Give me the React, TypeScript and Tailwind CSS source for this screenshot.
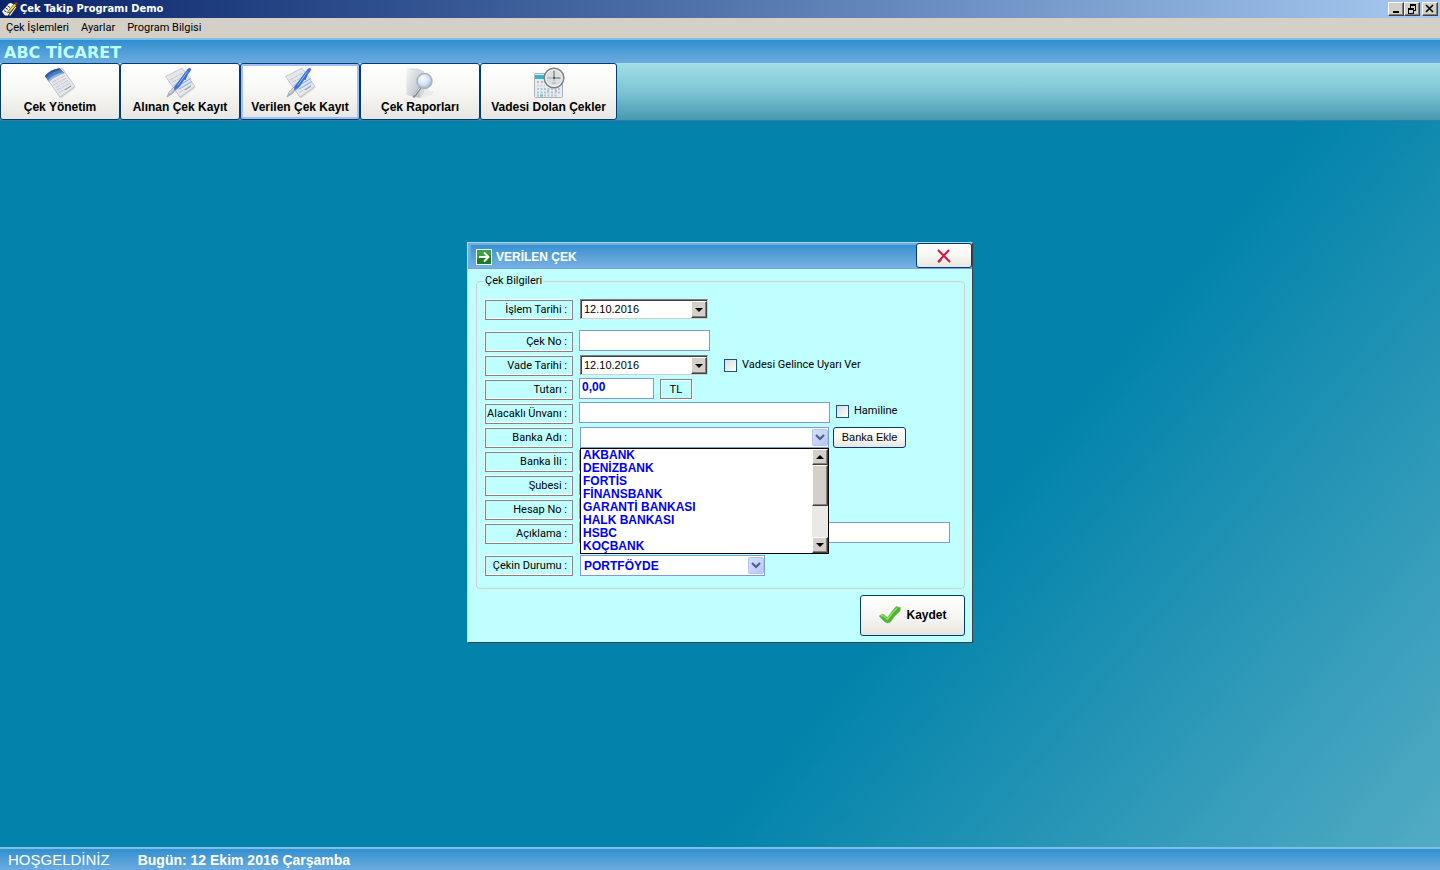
import { useState } from "react";
import type { ReactNode } from "react";

const BANKS = [
  "AKBANK",
  "DENİZBANK",
  "FORTİS",
  "FİNANSBANK",
  "GARANTİ BANKASI",
  "HALK BANKASI",
  "HSBC",
  "KOÇBANK",
];

const SANS = "font-['Liberation_Sans',Arial,sans-serif]";
const NARROW = "font-[Roboto,'Liberation_Sans',sans-serif]";
const XP_BUTTON =
  "rounded-[3px] border border-[#003c74] bg-linear-to-b from-white via-[#f7f7f4] to-[#e8e6e0] text-black";
const FIELD =
  "block h-[21px] border border-[#7b9bdc] bg-white px-0.5 text-[12px] font-bold text-[#0000f0] outline-none";
const BEVEL =
  "border border-t-white border-l-white border-r-[#404040] border-b-[#404040] bg-[#d4d0c8] shadow-[inset_-1px_-1px_0_#808080]";

/* ---------- icons ---------- */

function AppIcon() {
  return (
    <svg width="16" height="16" viewBox="0 0 16 16" aria-hidden="true">
      <path d="M0 10.500 7 2.500 9 2l2 1 1.500 1L6 14.500H3z" fill="#fafafa" />
      <path d="M3.500 7 6 8.500M2 9.500 4.500 11M5.500 5 8 6.500" stroke="#222" strokeWidth=".9" />
      <path d="M6.500 14.500 13.500 5l1 1.500-6 8.500z" fill="#fff" stroke="#111" strokeWidth=".7" />
      <path d="M6 10.500 12.500 2.500 14.500 4 8.500 11 5.500 12z" fill="#f5e21c" stroke="#222" strokeWidth=".6" />
      <path d="M12.500 2.500 13.800 1 16 2.500 14.500 4z" fill="#c81e1e" />
    </svg>
  );
}

function Sheet() {
  return (
    <g>
      <path d="M2 10 18 1.500 31 20 16 31z" fill="#8f929c" opacity=".3" transform="translate(.6 .8)" />
      <path d="M1.500 9.500 18 1 31 19.500 16 30z" fill="#e6e7ec" stroke="#b4b7c0" strokeWidth=".7" />
      <path
        d="M6 13 19 6M8 15.500 21 8.500M9.500 18 22.500 11M11.500 20.500 24 13.500M13 23 26 16M15 25.500 27.500 18.500"
        stroke="#bcbfc8"
        strokeWidth=".9"
        strokeDasharray="5 .8 3 .8"
      />
    </g>
  );
}

function ManageIcon() {
  return (
    <svg width="32" height="32" viewBox="0 0 32 32" fill="none" aria-hidden="true">
      <Sheet />
      <path d="M1 9Q6 2.500 15.500 1.200L20.500 6Q10 8 4.500 14.500z" fill="#4a7fc4" />
      <path d="M1 9Q6 2.500 15.500 1.200L17 2.800Q7 4.500 2.300 11z" fill="#30599a" />
      <path d="M4 13.300Q9 7.500 19 5.300L20.500 6.500Q10 9 5 15z" fill="#8ab6e6" />
      <path d="M21 23 27 19" stroke="#8c909a" />
    </svg>
  );
}

function PenIcon() {
  return (
    <svg width="32" height="32" viewBox="0 0 32 32" fill="none" aria-hidden="true">
      <Sheet />
      <path d="M18 16.500 27 11.500M15 22 28 14.500" stroke="#8db8f2" strokeWidth="1.300" />
      <path d="M21 23 27 19" stroke="#8c909a" />
      <path d="M3 30 5 25 14 15.500 16.500 18 8 27z" fill="#b4b8c2" stroke="#8b909a" strokeWidth=".5" />
      <path d="M5.500 26 14.500 17" stroke="#f6f6f8" />
      <path d="M10.500 20 21.500 5Q24 .8 26 1.200T25.500 5L15 20 10.500 23z" fill="#3674e0" stroke="#2a5fc0" strokeWidth=".4" />
      <path d="M13.500 18.500 23.500 4.500" stroke="#8fbcff" />
      <path d="M22.500 8 21 13" stroke="#2a62cc" strokeWidth="1.200" />
    </svg>
  );
}

function ReportIcon() {
  return (
    <svg width="32" height="32" viewBox="0 0 32 32" aria-hidden="true">
      <defs>
        <linearGradient id="folder" x1="0" y1="0" x2="1" y2="1">
          <stop offset="0" stopColor="#f4f6f7" />
          <stop offset="1" stopColor="#b4bdc3" />
        </linearGradient>
        <radialGradient id="lens" cx=".4" cy=".35" r=".7">
          <stop offset="0" stopColor="#fafdff" />
          <stop offset=".6" stopColor="#cfdff2" />
          <stop offset="1" stopColor="#94aed6" />
        </radialGradient>
      </defs>
      <path d="M15 24 23 21 25 24 30 24 28 28 16 31z" fill="#e8eaec" />
      <path d="M2.500 1.500 15 4.500 16 31 2.500 28z" fill="url(#folder)" />
      <path d="M3 1.500 13 1.500 20 4 20 26 16 31 15 5z" fill="#d3dade" />
      <path d="M16.500 20.500 10 29.500" stroke="#888d93" strokeWidth="2.600" strokeLinecap="round" />
      <path d="M16 20.500 10 28.500" stroke="#e4e6e8" strokeWidth="1" />
      <circle cx="20.500" cy="14" r="7.500" fill="url(#lens)" stroke="#adb1b7" strokeWidth="1.500" />
    </svg>
  );
}

function DueIcon() {
  return (
    <svg width="32" height="32" viewBox="0 0 32 32" fill="none" aria-hidden="true">
      <rect x="1.500" y="6.500" width="28" height="24" rx="1" fill="#e6edf0" stroke="#a9b3b9" />
      <rect x="2" y="8" width="12" height="4" fill="#38b4d8" />
      <path d="M4 15h7M14 24h2M22 24h2" stroke="#e0abb4" strokeWidth="2" strokeDasharray="2 2" />
      <path d="M4 22h24M4 25.500h24M4 28.500h20" stroke="#b4c6d0" strokeWidth="2" strokeDasharray="2 1.500" />
      <path d="M4 18.500h8" stroke="#ccd8de" strokeWidth="2" strokeDasharray="2 1.500" />
      <path d="M7 28.500h3" stroke="#6cc6da" strokeWidth="2" />
      <circle cx="21" cy="11" r="9.800" fill="#dcdfe1" stroke="#7c8083" strokeWidth="1.500" />
      <circle cx="21" cy="11" r="8.300" stroke="#f2f2f2" />
      <path d="M21 3.500V11h6.500" stroke="#5f6367" />
      <path d="M14 11h6M21 12v2M19 16h4" stroke="#9fa4a8" />
      <circle cx="21" cy="11" r="1" fill="#444" />
    </svg>
  );
}

function ArrowBadge() {
  return (
    <svg width="16" height="16" viewBox="0 0 16 16" fill="none" aria-hidden="true">
      <rect x=".5" y=".5" width="15" height="15" fill="#3aa044" stroke="#fff" />
      <path d="M1 10 15 6v9H1z" fill="#1c7d26" />
      <path d="M3 8h9M8 3.500 12.500 8 8 12.500" stroke="#fff" strokeWidth="2" />
    </svg>
  );
}

function RedCross() {
  return (
    <svg width="14" height="14" viewBox="0 0 14 14" fill="none" aria-hidden="true">
      <path d="M2 13.500 5 10.500M9 9l4 4" stroke="#8c8c8c" strokeWidth="1.500" />
      <path d="M1 13 12 1M1 1l12 12" stroke="#dc143c" strokeWidth="2" />
    </svg>
  );
}

function GreenCheck() {
  return (
    <svg width="24" height="20" viewBox="0 0 24 20" aria-hidden="true">
      <path
        d="M1 11 5 9 9.500 12.500Q14 6 18 1.500L22.500 2.500 22 6Q16 11 12.500 17 9.500 19 7 17 4 14.500 1 11z"
        fill="#4fb035"
        stroke="#7ccb62"
        strokeWidth=".7"
      />
      <path d="M3 11 5 10.500l4.500 4Q14 8 19 3" fill="none" stroke="#8fdc72" strokeWidth="1.400" />
    </svg>
  );
}

function Triangle({ up = false }: { up?: boolean }) {
  return (
    <svg width="8" height="4" viewBox="0 0 8 4" aria-hidden="true">
      <path d={up ? "M0 4h8L4 0z" : "M0 0h8L4 4z"} fill="#000" />
    </svg>
  );
}

function ComboChevron() {
  return (
    <span className="grid h-[17px] w-4 place-items-center rounded-[2px] border border-[#b0c4f0] bg-linear-to-br from-[#d6e2fb] to-[#b4c8f2]">
      <svg width="10" height="7" viewBox="0 0 10 7" fill="none" aria-hidden="true">
        <path d="M1 1l4 4 4-4" stroke="#4d6185" strokeWidth="2.200" />
      </svg>
    </span>
  );
}

/* ---------- form parts ---------- */

function Row({ id, label, children }: { id: string; label: string; children: ReactNode }) {
  return (
    <div className="flex h-6 items-start">
      <label
        htmlFor={id}
        className={`mt-0.5 mr-1.5 flex h-[20px] w-[88px] shrink-0 items-center justify-end border border-[#848484] pr-[5px] text-[11px] whitespace-nowrap shadow-[-1px_-1px_0_#fff,inset_-1px_-1px_0_#fff] ${NARROW}`}
      >
        {label}
      </label>
      {children}
    </div>
  );
}

function DateBox({ id }: { id: string }) {
  const [value, setValue] = useState("12.10.2016");
  return (
    <div className="mt-px ml-px flex h-5 w-32 border border-t-[#808080] border-r-[#d4d0c8] border-b-[#d4d0c8] border-l-[#808080] bg-white shadow-[inset_1px_1px_0_#404040]">
      <input
        id={id}
        value={value}
        onChange={(e) => setValue(e.target.value)}
        className="min-w-0 flex-1 bg-transparent pl-[3px] text-[11px] outline-none"
      />
      <button type="button" aria-label="Takvimi aç" className={`mt-px grid w-4 place-items-center ${BEVEL}`}>
        <Triangle />
      </button>
    </div>
  );
}

function Check({ label }: { label: string }) {
  return (
    <label className={`flex h-[18px] items-center gap-[5px] text-[11px] ${NARROW}`}>
      <input
        type="checkbox"
        className="size-[13px] appearance-none border border-[#1c5180] bg-linear-to-br from-[#dcdcd7] to-white checked:bg-[#21a121]"
      />
      {label}
    </label>
  );
}

function BankCombo() {
  const [open, setOpen] = useState(true);
  const [bank, setBank] = useState("");
  return (
    <div className="relative mt-px ml-px w-[249px]">
      <input
        id="banka"
        role="combobox"
        aria-expanded={open}
        aria-controls="banka-list"
        readOnly
        value={bank}
        className={`${FIELD} w-full`}
      />
      <button
        type="button"
        aria-label="Banka listesi"
        onClick={() => setOpen(!open)}
        className="absolute top-0.5 right-px"
      >
        <ComboChevron />
      </button>
      {open && (
        <div className="absolute top-full left-0 z-10 flex w-full border border-black bg-white">
          <ul id="banka-list" role="listbox" aria-label="Banka Adı" className="flex-1 pl-0.5">
            {BANKS.map((name) => (
              <li
                key={name}
                role="option"
                aria-selected={name === bank}
                onClick={() => {
                  setBank(name);
                  setOpen(false);
                }}
                className="h-[13px] text-[12px] leading-[13px] font-bold text-[#0000f0]"
              >
                {name}
              </li>
            ))}
          </ul>
          <div className="flex w-4 flex-col bg-[#ebe9e5]">
            <button type="button" aria-label="Yukarı" className={`grid h-4 place-items-center ${BEVEL}`}>
              <Triangle up />
            </button>
            <div className={`h-[41px] ${BEVEL}`} />
            <div className="flex-1" />
            <button type="button" aria-label="Aşağı" className={`grid h-4 place-items-center ${BEVEL}`}>
              <Triangle />
            </button>
          </div>
        </div>
      )}
    </div>
  );
}

function Dialog() {
  return (
    <section
      aria-labelledby="dialog-title"
      className="h-fit w-[506px] border border-t-[#b8d4e8] border-r-[#404040] border-b-[#404040] border-l-[#d4d0c8] bg-[#c0ffff]"
    >
      <header className="flex h-[26px] items-stretch border-b border-[#7d9fd8] bg-linear-to-b from-[#2f8fd0] to-[#78b0e2] shadow-[inset_3px_2px_0_#6aaedb]">
        <div className="flex flex-1 items-center gap-1 pt-[3px] pl-2">
          <ArrowBadge />
          <h2 id="dialog-title" className="text-[12px] font-bold text-white">
            VERİLEN ÇEK
          </h2>
        </div>
        <button type="button" aria-label="Kapat" className={`grid w-14 place-items-center ${XP_BUTTON}`}>
          <RedCross />
        </button>
      </header>
      <form className="pt-[5px] pr-[7px] pb-1.5 pl-2" onSubmit={(e) => e.preventDefault()}>
        <fieldset className="rounded-[4px] border border-[#d0d0c8] px-2 pb-2.5">
          <legend className={`-ml-px h-[14px] px-px text-[11px] leading-[14px] ${NARROW}`}>Çek Bilgileri</legend>
          <div className="pt-2.5 pb-2">
            <Row id="islem" label="İşlem Tarihi :">
              <DateBox id="islem" />
            </Row>
          </div>
          <Row id="cekno" label="Çek No :">
            <input id="cekno" className={`${FIELD} w-[131px]`} />
          </Row>
          <Row id="vade" label="Vade Tarihi :">
            <DateBox id="vade" />
            <div className="pt-0.5 pl-4">
              <Check label="Vadesi Gelince Uyarı Ver" />
            </div>
          </Row>
          <Row id="tutar" label="Tutarı :">
            <input id="tutar" defaultValue="0,00" className={`${FIELD} w-[75px] pb-[3px]`} />
            <span className="mt-px ml-1.5 grid h-5 w-8 place-items-center border border-[#848484] text-[11px] shadow-[inset_1px_1px_0_#fff,1px_1px_0_#fff]">
              TL
            </span>
          </Row>
          <Row id="unvan" label="Alacaklı Ünvanı :">
            <input id="unvan" className={`${FIELD} mr-1.5 w-[251px]`} />
            <Check label="Hamiline" />
          </Row>
          <Row id="banka" label="Banka Adı :">
            <BankCombo />
            <button type="button" className={`mt-px ml-1 h-[21px] w-[73px] text-[11px] ${XP_BUTTON}`}>
              Banka Ekle
            </button>
          </Row>
          <Row id="il" label="Banka İli :">
            <input id="il" className={`${FIELD} w-[187px]`} />
          </Row>
          <Row id="sube" label="Şubesi :">
            <input id="sube" className={`${FIELD} w-[187px]`} />
          </Row>
          <Row id="hesap" label="Hesap No :">
            <input id="hesap" className={`${FIELD} w-[187px]`} />
          </Row>
          <Row id="aciklama" label="Açıklama :">
            <input id="aciklama" className={`${FIELD} w-[371px]`} />
          </Row>
          <div className="pt-2">
            <Row id="durum" label="Çekin Durumu :">
              <div className="relative mt-px ml-px">
                <select id="durum" className={`${FIELD} w-[185px] appearance-none pl-[3px]`}>
                  <option>PORTFÖYDE</option>
                </select>
                <span className="pointer-events-none absolute top-0.5 right-px">
                  <ComboChevron />
                </span>
              </div>
            </Row>
          </div>
        </fieldset>
        <div className="flex justify-end pt-1.5">
          <button
            type="submit"
            className={`flex h-[41px] w-[105px] items-center justify-center gap-1 pb-0.5 text-[12px] font-bold ${XP_BUTTON}`}
          >
            <GreenCheck />
            Kaydet
          </button>
        </div>
      </form>
    </section>
  );
}

/* ---------- window chrome ---------- */

function CaptionButton({ label, children }: { label: string; children: ReactNode }) {
  return (
    <button type="button" aria-label={label} className={`grid h-[14px] w-4 place-items-center ${BEVEL}`}>
      <svg width="10" height="10" viewBox="0 0 10 10" fill="none" stroke="#000" shapeRendering="crispEdges" aria-hidden="true">
        {children}
      </svg>
    </button>
  );
}

const TOOLS = [
  { label: "Çek Yönetim", icon: <ManageIcon />, size: "w-[120px]" },
  { label: "Alınan Çek Kayıt", icon: <PenIcon />, size: "w-[120px]" },
  { label: "Verilen Çek Kayıt", icon: <PenIcon />, size: "w-[120px]", active: true },
  { label: "Çek Raporları", icon: <ReportIcon />, size: "w-[120px]" },
  { label: "Vadesi Dolan Çekler", icon: <DueIcon />, size: "w-[137px]" },
];

export default function App() {
  return (
    <div className={`flex min-h-screen flex-col bg-[#0082aa] text-black ${SANS}`}>
      <div className="flex h-[18px] items-center gap-0.5 bg-linear-to-r from-[#0a246a] to-[#a6caf0] pr-0.5 pl-0.5">
        <AppIcon />
        <h1 className="flex-1 font-['DejaVu_Sans_Condensed','DejaVu_Sans',sans-serif] text-[11px] font-bold text-white">
          Çek Takip Programı Demo
        </h1>
        <div className="flex">
          <CaptionButton label="Simge durumuna küçült">
            <path d="M2 8h6" strokeWidth="2" />
          </CaptionButton>
          <CaptionButton label="Önceki boyut">
            <path d="M3 1h6M1 5h6" strokeWidth="2" />
            <path d="M3.500 2v2M8.500 2v4.500H7M1.500 5v4.500h5V5" />
          </CaptionButton>
        </div>
        <CaptionButton label="Kapat">
          <path d="M1 1l7 7M8 1 1 8" strokeWidth="1.600" shapeRendering="auto" />
        </CaptionButton>
      </div>

      <nav className={`flex h-5 items-center gap-3 bg-[#d4d0c8] pl-1.5 text-[11px] ${NARROW}`}>
        <a href="#cek">Çek İşlemleri</a>
        <a href="#ayarlar">Ayarlar</a>
        <a href="#bilgi">Program Bilgisi</a>
      </nav>

      <div className="flex h-[25px] items-center border-t-2 border-[#7fbfe4] bg-linear-to-b from-[#2f8fd0] to-[#6aabdf] pt-0.5 pl-1 font-['DejaVu_Sans',sans-serif] text-[16px] font-bold text-[#c0ffff]">
        ABC TİCARET
      </div>

      <div className="flex h-[58px] items-start border-b border-[#3a7ba5] bg-linear-to-b from-[#a3dfe6] via-[#7cc5d5] to-[#4699b1]">
        {TOOLS.map((tool) => (
          <button
            key={tool.label}
            type="button"
            className={`flex h-[57px] flex-col items-center pt-[3px] text-[12px] leading-4 font-bold whitespace-nowrap ${XP_BUTTON} ${tool.size} ${
              tool.active ? "shadow-[inset_0_0_0_2px_#a5bdf5]" : ""
            }`}
          >
            {tool.icon}
            {tool.label}
          </button>
        ))}
      </div>

      <main className="flex flex-1 items-start justify-center bg-[linear-gradient(130deg,#0082aa_63%,#52abc3_100%)] pt-[121px]">
        <Dialog />
      </main>

      <footer className="flex h-[23px] items-center gap-7 border-t-2 border-[#7fbfe4] bg-linear-to-b from-[#2f8fd0] to-[#6aabdf] pl-2 text-white">
        <span className="pt-0.5 text-[15px]">HOŞGELDİNİZ</span>
        <span className="pt-0.5 text-[14px] font-bold">Bugün: 12 Ekim 2016 Çarşamba</span>
      </footer>
    </div>
  );
}
